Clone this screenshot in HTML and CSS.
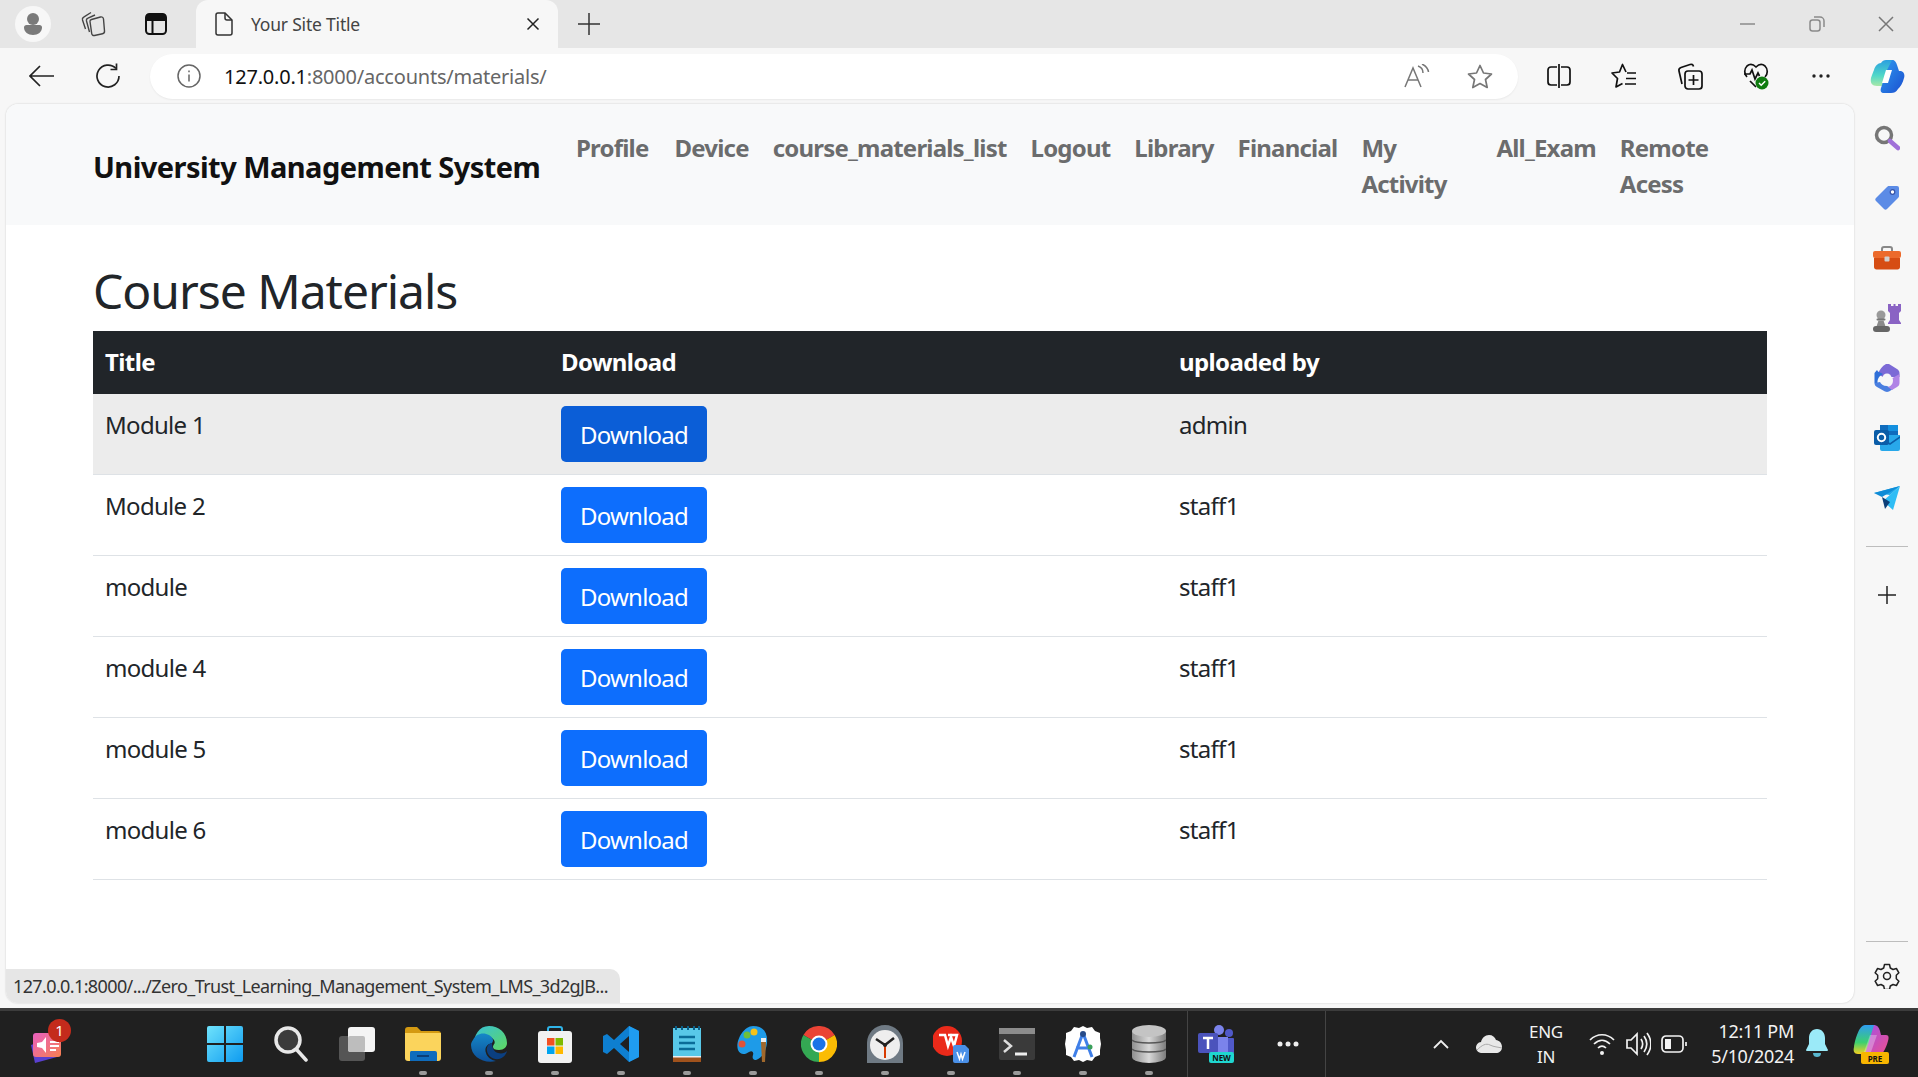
FILE: index.html
```html
<!DOCTYPE html>
<html lang="en">
<head>
    <meta charset="UTF-8">
    <title>Your Site Title</title>
    <link rel="stylesheet" href="styles.css">
</head>
<body>

    <!-- browser tab strip -->
    <div class="tabstrip">
        <div class="profile">
            <svg width="18" height="22" viewBox="0 0 18 22"><circle cx="9" cy="6" r="6" fill="#7a7a7a"/><path d="M0 14.500c0-1.500 1-2.500 2.500-2.500h13c1.500 0 2.500 1 2.500 2.500 0 4.500-4 7.500-9 7.500s-9-3-9-7.500z" fill="#7a7a7a"/></svg>
        </div>
        <div class="strip-btn">
            <svg width="26" height="26" viewBox="0 0 26 26" fill="none" stroke="#444" stroke-width="1.400"><path d="M11.500 8.500l9-2.500c1.500-.4 2.800.4 3 2l1 12c.2 1.500-.6 2.500-2 2.800l-8 1.700c-1.500.3-2.600-.5-2.800-2L10 10.500c-.2-1 .5-1.700 1.500-2z"/><path d="M9.500 21 6.500 10c-.3-1.300.3-2.300 1.500-2.800L15 4"/><path d="M5.500 18 2.500 9c-.4-1.300 0-2.200 1.200-2.900L11 1.500"/></svg>
        </div>
        <div class="strip-btn">
            <svg width="24" height="24" viewBox="0 0 24 24" fill="none"><rect x="2" y="2" width="20" height="20" rx="3.500" stroke="#111" stroke-width="2"/><path d="M2 5c0-2 1-3 3-3h14c2 0 3 1 3 3v4H2z" fill="#111"/><path d="M8.500 9v13" stroke="#111" stroke-width="2"/></svg>
        </div>
        <div class="tab">
            <svg width="18" height="24" viewBox="0 0 18 24" fill="none" stroke="#333" stroke-width="1.500"><path d="M3 1h7l7 7v13a2 2 0 0 1-2 2H3a2 2 0 0 1-2-2V3a2 2 0 0 1 2-2z"/><path d="M10 1v5a2 2 0 0 0 2 2h5"/></svg>
            <span class="tab-title">Your Site Title</span>
            <svg class="tab-close" width="14" height="14" viewBox="0 0 14 14" stroke="#222" stroke-width="1.500"><path d="M1.500 1.500l11 11M12.500 1.500l-11 11"/></svg>
        </div>
        <div class="newtab">
            <svg width="22" height="22" viewBox="0 0 22 22" stroke="#333" stroke-width="1.500"><path d="M11 0v22M0 11h22"/></svg>
        </div>
        <div class="win-controls">
            <svg width="16" height="16" viewBox="0 0 16 16" stroke="#8a8a8a" stroke-width="1.500"><path d="M0 8h15"/></svg>
            <svg width="16" height="16" viewBox="0 0 16 16" fill="none" stroke="#8a8a8a" stroke-width="1.500"><rect x="1" y="4" width="10" height="11" rx="2.500"/><path d="M5 1h6a4 4 0 0 1 4 4v6"/></svg>
            <svg width="16" height="16" viewBox="0 0 16 16" stroke="#777" stroke-width="1.500"><path d="M1 1l14 14M15 1 1 15"/></svg>
        </div>
    </div>

    <!-- address bar row -->
    <div class="toolbar">
        <div class="nav-btn">
            <svg width="26" height="22" viewBox="0 0 26 22" fill="none" stroke="#222" stroke-width="1.700"><path d="M1 11h24M11 1 1 11l10 10"/></svg>
        </div>
        <div class="nav-btn">
            <svg width="26" height="26" viewBox="0 0 26 26" fill="none" stroke="#222" stroke-width="1.700"><path d="M21 5.500A11 11 0 1 0 24 13"/><path d="M15.500 6.500h6v-6"/></svg>
        </div>
        <div class="urlbar">
            <svg width="24" height="24" viewBox="0 0 24 24" fill="none" stroke="#666" stroke-width="1.500"><circle cx="12" cy="12" r="11"/><path d="M12 10.500v7M12 6.500v1.800"/></svg>
            <span class="url"><span class="url-host">127.0.0.1</span>:8000/accounts/materials/</span>
            <div class="url-actions">
                <svg width="26" height="24" viewBox="0 0 26 24" fill="none" stroke="#777" stroke-width="1.500"><path d="M1 23 9 4l8 19M4 16h10"/><path d="M14 2c3 1 5 3 5 7M18 0c4 2 6 4 6.500 8"/></svg>
                <svg width="26" height="25" viewBox="0 0 26 25" fill="none" stroke="#777" stroke-width="1.700" stroke-linejoin="round"><path d="M13 1.500l3.500 7.500 8 1-6 5.500 1.700 8-7.200-4-7.200 4 1.700-8-6-5.500 8-1z"/></svg>
            </div>
        </div>
        <div class="tool-btns">
            <div class="tool-btn"><svg width="24" height="26" viewBox="0 0 24 26" fill="none" stroke="#111" stroke-width="1.700"><path d="M10 4H4a3 3 0 0 0-3 3v12a3 3 0 0 0 3 3h6M14 4h6a3 3 0 0 1 3 3v12a3 3 0 0 1-3 3h-6M12 1v24"/></svg></div>
            <div class="tool-btn"><svg width="26" height="26" viewBox="0 0 26 26" fill="none" stroke="#111" stroke-width="1.700" stroke-linejoin="round"><path d="M15 9 11.500 1.500 8.500 9 1 10l5.500 5.500L5 24l6.500-3.500"/><path d="M16 10h9M15 15.500h10M14 21h11"/></svg></div>
            <div class="tool-btn"><svg width="26" height="28" viewBox="0 0 26 28" fill="none" stroke="#111" stroke-width="1.700"><path d="M5 22 2 9c-.5-2 .5-3 2-3.500l9-3c2-.5 3 0 3.500 2"/><rect x="8" y="9" width="17" height="18" rx="3"/><path d="M16.500 13v10M11.500 18h10"/></svg></div>
            <div class="tool-btn"><svg width="26" height="28" viewBox="0 0 26 28"><path d="M4 15C1 12 1 7 4 4c3-2.500 6-2 9 1 3-3 6-3.500 9-1 3 3 3 8 0 11" fill="none" stroke="#111" stroke-width="1.700"/><path d="M1 12h6l2-4 3 9 3-6 1.500 3" fill="none" stroke="#111" stroke-width="1.700"/><path d="M7 19l6 6" stroke="#111" stroke-width="1.700"/><circle cx="19" cy="21" r="6.500" fill="#107c10"/><path d="M16 21l2.200 2.200 4-4" fill="none" stroke="#fff" stroke-width="1.500"/></svg></div>
            <div class="tool-btn"><svg width="20" height="6" viewBox="0 0 20 6" fill="#222"><circle cx="3" cy="3" r="1.700"/><circle cx="10" cy="3" r="1.700"/><circle cx="17" cy="3" r="1.700"/></svg></div>
            <div class="tool-btn">
                <svg width="36" height="36" viewBox="0 0 36 36">
                    <defs>
                        <linearGradient id="cpA" x1="0" y1="0" x2="0" y2="1"><stop offset="0" stop-color="#2a9fe0"/><stop offset="0.600" stop-color="#50d8c8"/><stop offset="1" stop-color="#a8e8a8"/></linearGradient>
                        <linearGradient id="cpB" x1="0" y1="0" x2="1" y2="1"><stop offset="0" stop-color="#2f9cf0"/><stop offset="1" stop-color="#1b4fd0"/></linearGradient>
                    </defs>
                    <path d="M12 5c1-2 3-3 5-3h6c3 0 2 3 1 5l-6 17c-1 3-3 4-5 4H8c-5 0-7-3-6-8 1-3 2-6 3-8 1-4 4-7 7-7z" fill="url(#cpA)"/>
                    <path d="M23 2c3 0 4 2 5 5l2 6h2c3 1 4 4 3 7-1 5-4 9-6 11-2 3-4 4-7 4h-7c-3 0-4-2-3-5l6-18z" fill="url(#cpB)"/>
                    <path d="M17 12h6l-4 13h-6z" fill="#fff"/>
                </svg>
            </div>
        </div>
    </div>

    <div class="middle">
        <div class="webview">
            <nav class="navbar">
                <a class="brand">University Management System</a>
                <ul class="nav-links">
                    <li><a>Profile</a></li>
                    <li><a>Device</a></li>
                    <li><a>course_materials_list</a></li>
                    <li><a>Logout</a></li>
                    <li><a>Library</a></li>
                    <li><a>Financial</a></li>
                    <li class="wide"><a>My<br>Activity</a></li>
                    <li><a>All_Exam</a></li>
                    <li><a>Remote<br>Acess</a></li>
                </ul>
            </nav>

            <div class="container">
                <h1>Course Materials</h1>
                <table class="materials">
                    <colgroup>
                        <col class="col-title">
                        <col class="col-download">
                        <col class="col-user">
                    </colgroup>
                    <thead>
                        <tr><th>Title</th><th>Download</th><th>uploaded by</th></tr>
                    </thead>
                    <tbody>
                        <tr class="hovered"><td>Module 1</td><td><a class="btn">Download</a></td><td>admin</td></tr>
                        <tr><td>Module 2</td><td><a class="btn">Download</a></td><td>staff1</td></tr>
                        <tr><td>module</td><td><a class="btn">Download</a></td><td>staff1</td></tr>
                        <tr><td>module 4</td><td><a class="btn">Download</a></td><td>staff1</td></tr>
                        <tr><td>module 5</td><td><a class="btn">Download</a></td><td>staff1</td></tr>
                        <tr><td>module 6</td><td><a class="btn">Download</a></td><td>staff1</td></tr>
                    </tbody>
                </table>
            </div>

            <div class="status-bubble">127.0.0.1:8000/.../Zero_Trust_Learning_Management_System_LMS_3d2gJB...</div>
        </div>

        <aside class="sidebar">
            <div class="side-btn">
                <svg width="26" height="26" viewBox="0 0 26 26"><circle cx="10" cy="10" r="7.500" fill="none" stroke="#767676" stroke-width="3.500"/><path d="M16 16l8 7" stroke="#a070d8" stroke-width="4.500" stroke-linecap="round"/></svg>
            </div>
            <div class="side-btn">
                <svg width="26" height="26" viewBox="0 0 26 26"><path d="M15 1h8a2 2 0 0 1 2 2v8c0 1-.5 1.500-1 2L13 24c-1 1-2 1-3 0L2 16c-1-1-1-2 0-3L13 2c.5-.5 1-1 2-1z" fill="#5b8be6"/><circle cx="18.500" cy="7" r="2.300" fill="#fff" stroke="#3553a8" stroke-width="1.200"/></svg>
            </div>
            <div class="side-btn">
                <svg width="28" height="24" viewBox="0 0 28 24"><path d="M9 6V3c0-1 1-2 2-2h6c1 0 2 1 2 2v3" fill="none" stroke="#888" stroke-width="2"/><rect x="0" y="5" width="28" height="7" rx="2" fill="#ec6a2c"/><path d="M1 12h26v9c0 1.500-1 2.500-2.500 2.500h-21C2 23.500 1 22.500 1 21z" fill="#d64d14"/><rect x="11.500" y="10.500" width="5" height="5" rx="1" fill="#d0d0d0"/></svg>
            </div>
            <div class="side-btn">
                <svg width="28" height="28" viewBox="0 0 28 28"><path d="M16 0h2v2h2.500V0h2v2H25V0h3v7l-2 2v7l2 3v1H15v-1l2-3V9l-2-2V0z" fill="#8a63c4"/><circle cx="8" cy="11" r="4.500" fill="#9a9a9a"/><rect x="3.500" y="14.500" width="9" height="2" rx="1" fill="#777"/><path d="M5.500 16.500h5l2 6h-9z" fill="#8a8a8a"/><rect x="0" y="22" width="17" height="6" rx="3" fill="#666"/></svg>
            </div>
            <div class="side-btn">
                <svg width="26" height="28" viewBox="0 0 26 28">
                    <path d="M12 0c1-.5 2-.5 3 0l8 5c1.500 1 2.500 2 2.500 4v4H17c-2-3-6-3-8 0l-5-3c2-5 4-8 8-10z" fill="#7c6ad6"/>
                    <path d="M3 6 .5 9v10l3.500 2c-1-3-1-8 5-11L4 7.500z" fill="#2f6fd8"/>
                    <path d="M.5 19c0 2 1 3 2.500 4l8 4.500c1.500.5 2.500.5 4 0l4-2.500-6-3c-4 0-6-2-7-4z" fill="#4a7fe0"/>
                    <path d="M25.500 10v9c0 2-1 3-2.500 4l-5 3-4-3c4-1 6-5 4.500-9z" fill="#b084e6"/>
                    <circle cx="13" cy="14" r="4.500" fill="#f7f7f7"/>
                </svg>
            </div>
            <div class="side-btn">
                <svg width="26" height="26" viewBox="0 0 26 26"><rect x="6" y="0" width="18" height="14" fill="#0f6cbd"/><path d="M6 10h20v14a2 2 0 0 1-2 2H8a2 2 0 0 1-2-2z" fill="#28a8ea"/><path d="M14 0h10v6H14z" fill="#1490df"/><path d="M6 11l10 7 10-7v2L16 20 6 13z" fill="#0a5da8"/><rect x="0" y="5" width="15" height="15" rx="2" fill="#0a5da8"/><circle cx="7.500" cy="12.500" r="3.700" fill="none" stroke="#fff" stroke-width="2"/></svg>
            </div>
            <div class="side-btn">
                <svg width="26" height="24" viewBox="0 0 26 24"><path d="M0 7 26 0 16 9z" fill="#1fa8ea"/><path d="M26 0 19 24 9 15z" fill="#2fbdf5"/><path d="M0 7l8 4 18-11z" fill="#0f8bd6"/><path d="M8 11l3 12 5-7z" fill="#0d3f78"/></svg>
            </div>
            <div class="side-divider"></div>
            <div class="side-btn">
                <svg width="20" height="20" viewBox="0 0 20 20" stroke="#222" stroke-width="1.500"><path d="M10 1v18M1 10h18"/></svg>
            </div>
            <div class="side-bottom">
                <div class="side-divider"></div>
                <div class="side-btn">
                    <svg width="26" height="26" viewBox="0 0 26 26" fill="none" stroke="#222" stroke-width="1.500" stroke-linejoin="round"><path d="M10.500 1.500h5l.8 3.500 2.700 1.500 3.400-1 2.500 4.300-2.600 2.500v3.400l2.600 2.500-2.500 4.300-3.400-1-2.700 1.500-.8 3.500h-5l-.8-3.500-2.700-1.500-3.400 1-2.500-4.300 2.600-2.500v-3.400L1.100 9.800 3.600 5.500l3.400 1L9.700 5z"/><circle cx="13" cy="13" r="3.500"/></svg>
                </div>
            </div>
        </aside>
    </div>

    <!-- windows taskbar -->
    <div class="taskbar">
        <div class="widget">
            <svg width="36" height="38" viewBox="0 0 36 38">
                <defs><linearGradient id="wgA" x1="0" y1="0" x2="1" y2="1"><stop offset="0" stop-color="#e860c0"/><stop offset="1" stop-color="#f88050"/></linearGradient></defs>
                <path d="M2 20 24 12l4 20-22 6z" fill="#5a40d0"/>
                <rect x="4" y="8" width="28" height="24" rx="3" fill="url(#wgA)"/>
                <path d="M8 18l5-1 4-5v16l-4-5-5-1z" fill="#fff"/>
                <path d="M21 17h9M21 21h9M21 25h6" stroke="#fff" stroke-width="2"/>
            </svg>
            <span class="badge">1</span>
        </div>
        <div class="task-apps">
            <div class="task-app">
                <svg width="36" height="36" viewBox="0 0 36 36"><defs><linearGradient id="winA" x1="0" y1="0" x2="1" y2="1"><stop offset="0" stop-color="#6fe3fc"/><stop offset="1" stop-color="#0e9bf0"/></linearGradient></defs><path d="M2 0h15v17H0V2a2 2 0 0 1 2-2zM19 0h15a2 2 0 0 1 2 2v15H19zM0 19h17v17H2a2 2 0 0 1-2-2zM19 19h17v15a2 2 0 0 1-2 2H19z" fill="url(#winA)"/></svg>
            </div>
            <div class="task-app">
                <svg width="34" height="36" viewBox="0 0 34 36"><circle cx="14" cy="14" r="12" fill="#3b3b3b" stroke="#e8e8e8" stroke-width="3.500"/><path d="M23 24l9 10" stroke="#e8e8e8" stroke-width="3.500" stroke-linecap="round"/></svg>
            </div>
            <div class="task-app">
                <svg width="36" height="34" viewBox="0 0 36 34"><rect x="0" y="9" width="26" height="25" rx="3" fill="#555"/><rect x="9" y="0" width="27" height="25" rx="3" fill="#f4f4f4"/><rect x="9" y="9" width="17" height="16" rx="2" fill="#bdbdbd"/></svg>
            </div>
            <div class="task-app running">
                <svg width="36" height="34" viewBox="0 0 36 34"><path d="M0 3a3 3 0 0 1 3-3h9l4 4h17a3 3 0 0 1 3 3v5H0z" fill="#d49a12"/><path d="M0 6h36v25a3 3 0 0 1-3 3H3a3 3 0 0 1-3-3z" fill="#fbd45c"/><path d="M6 24h24a2 2 0 0 1 2 2v8H5v-8a2 2 0 0 1 1-2z" fill="#0f6cbd"/><path d="M12 29h12" stroke="#0a3e78" stroke-width="2"/></svg>
            </div>
            <div class="task-app running">
                <svg width="36" height="36" viewBox="0 0 36 36">
                    <defs>
                        <linearGradient id="edA" x1="0" y1="0" x2="1" y2="1"><stop offset="0" stop-color="#37c0d8"/><stop offset="1" stop-color="#5fd860"/></linearGradient>
                        <linearGradient id="edB" x1="0" y1="0" x2="0" y2="1"><stop offset="0" stop-color="#1587c8"/><stop offset="1" stop-color="#0d4f98"/></linearGradient>
                    </defs>
                    <path d="M18 0c10 0 18 7 18 17 0 4-3 7-8 7-4 0-6-1-6-3 0-3 3-3 1-7-2-3-7-5-11-3-5 2-8 6-10 10C3 9 8 0 18 0z" fill="url(#edA)"/>
                    <path d="M2 14C5 7 13 6 18 9c4 2 5 6 3 8-5 1-8 5-6 10 1 4 5 7 10 8C13 38 0 31 0 19c0-2 1-4 2-5z" fill="url(#edB)"/>
                    <path d="M21 17c-3 0-6 4-5 8 1 5 6 9 12 8 4-1 7-4 8-8-2 2-5 3-9 2-4-1-6-5-6-10z" fill="#0b3f80"/>
                </svg>
            </div>
            <div class="task-app running">
                <svg width="34" height="38" viewBox="0 0 34 38"><path d="M10 8V4a2 2 0 0 1 2-2h10a2 2 0 0 1 2 2v4" fill="none" stroke="#2fb4e8" stroke-width="2"/><path d="M3 6h28a3 3 0 0 1 3 3v26a3 3 0 0 1-3 3H3a3 3 0 0 1-3-3V9a3 3 0 0 1 3-3z" fill="#f2f2f2"/><rect x="9" y="13" width="7.500" height="7.500" fill="#f25022"/><rect x="17.500" y="13" width="7.500" height="7.500" fill="#7fba00"/><rect x="9" y="21.500" width="7.500" height="7.500" fill="#00a4ef"/><rect x="17.500" y="21.500" width="7.500" height="7.500" fill="#ffb900"/></svg>
            </div>
            <div class="task-app running">
                <svg width="36" height="36" viewBox="0 0 36 36"><path d="M26 0l10 5v26l-10 5-15-14-7 6-4-2V10l4-2 7 6zM26 10l-9 8 9 8z" fill="#0e7fd0"/><path d="M26 0l10 5v26l-10 5z" fill="#1f9cf0"/></svg>
            </div>
            <div class="task-app running">
                <svg width="28" height="36" viewBox="0 0 28 36"><rect x="0" y="2" width="28" height="30" fill="#58c8e8"/><path d="M3 0v4M9 0v4M15 0v4M21 0v4M26 0v4" stroke="#0a5f88" stroke-width="2"/><path d="M6 11h16M6 17h16M6 23h16" stroke="#0a6c98" stroke-width="2.500"/><rect x="0" y="31" width="28" height="5" fill="#a0521c"/><rect x="0" y="30" width="28" height="1.500" fill="#eee"/></svg>
            </div>
            <div class="task-app running">
                <svg width="34" height="36" viewBox="0 0 34 36"><path d="M17 0c10 0 15 6 14 17-1 9-6 16-11 17-3 .5-4-2-3-5 1-3-1-5-4-3-4 3-9 3-11-2C-1 16 7 0 17 0z" fill="#1e9be8"/><circle cx="11" cy="9" r="3.500" fill="#6fbf3a"/><circle cx="18" cy="6" r="3.500" fill="#f5c21a"/><circle cx="6" cy="18" r="3.500" fill="#e0533a"/><rect x="25" y="12" width="5" height="5" fill="#eee"/><path d="M25 16h5l-1 20h-3z" fill="#a0682c"/></svg>
            </div>
            <div class="task-app running">
                <svg width="36" height="36" viewBox="0 0 36 36"><path d="M18 18 2.400 9A18 18 0 0 1 33.600 9z" fill="#ea4335"/><path d="M18 18 33.600 9A18 18 0 0 1 18 36z" fill="#fbbc04"/><path d="M18 18v18A18 18 0 0 1 2.400 9z" fill="#34a853"/><circle cx="18" cy="18" r="8.500" fill="#fff"/><circle cx="18" cy="18" r="6.500" fill="#1a73e8"/></svg>
            </div>
            <div class="task-app running">
                <svg width="36" height="38" viewBox="0 0 36 38"><path d="M0 38V18C0 8 8 0 18 0s18 8 18 18v20z" fill="#6f7a84"/><circle cx="18" cy="20" r="15" fill="#eee"/><path d="M18 20 9 14M18 20l9-7" stroke="#222" stroke-width="2.500"/><path d="M18 20v13" stroke="#d83b01" stroke-width="2"/><circle cx="18" cy="20" r="2" fill="#222"/></svg>
            </div>
            <div class="task-app running">
                <svg width="36" height="38" viewBox="0 0 36 38"><circle cx="14" cy="16" r="15" fill="#ea2a1a"/><path d="M6 10h6l3 11 3-9 3 9 3-11h-9" fill="none" stroke="#fff" stroke-width="2.500"/><path d="M22 20h10l4 4v12a2 2 0 0 1-2 2H22a2 2 0 0 1-2-2V22a2 2 0 0 1 2-2z" fill="#4a90e8"/><path d="M24 27l2.500 7 1.500-5 1.500 5 2.500-7" fill="none" stroke="#fff" stroke-width="1.500"/></svg>
            </div>
            <div class="task-app running">
                <svg width="36" height="32" viewBox="0 0 36 32"><rect x="0" y="0" width="36" height="32" rx="2" fill="#3a3a3a"/><rect x="0" y="0" width="36" height="6" fill="#8c8c8c"/><path d="M5 12l7 6-7 6" fill="none" stroke="#ddd" stroke-width="2.500"/><path d="M16 26h12" stroke="#eee" stroke-width="3"/></svg>
            </div>
            <div class="task-app running">
                <svg width="36" height="36" viewBox="0 0 36 36"><path d="M18 0l4 2 5-1 3 4 5 2v5l1 6-1 6v5l-5 2-3 4-5-1-4 2-4-2-5 1-3-4-5-2v-5L0 18l1-6V7l5-2 3-4 5 1z" fill="#fff"/><path d="M18 7l-9 24M18 7l9 24M11 22h14" fill="none" stroke="#3f7fe8" stroke-width="3"/><circle cx="18" cy="8" r="3" fill="#274b8a"/><circle cx="25" cy="21" r="2.500" fill="#3aa05a"/></svg>
            </div>
            <div class="task-app running">
                <svg width="34" height="38" viewBox="0 0 34 38"><defs><linearGradient id="dbA" x1="0" y1="0" x2="1" y2="0"><stop offset="0" stop-color="#8f8f8f"/><stop offset="0.500" stop-color="#d8d8d8"/><stop offset="1" stop-color="#7c7c7c"/></linearGradient></defs><rect x="0" y="6" width="34" height="26" fill="url(#dbA)"/><ellipse cx="17" cy="32" rx="17" ry="6" fill="url(#dbA)"/><ellipse cx="17" cy="6" rx="17" ry="6" fill="#c4c4c4"/><path d="M0 15c3 4 31 4 34 0M0 24c3 4 31 4 34 0" fill="none" stroke="#555" stroke-width="1.500"/></svg>
            </div>
        </div>
        <div class="task-sep"></div>
        <div class="task-teams">
            <svg width="36" height="38" viewBox="0 0 36 38"><circle cx="21" cy="5" r="5" fill="#7b83eb"/><circle cx="31" cy="8" r="4" fill="#5059c9"/><path d="M24 13h11a1 1 0 0 1 1 1v14H24z" fill="#5059c9"/><path d="M12 12h18v20H12z" fill="#7b83eb"/><rect x="0" y="8" width="20" height="20" rx="2" fill="#4b53bc"/><path d="M5 13h10M10 13v11" stroke="#fff" stroke-width="2.500"/><rect x="11" y="27" width="25" height="11" rx="2" fill="#1fd6d0"/><text class="new-tag" x="23.500" y="36">NEW</text></svg>
        </div>
        <div class="task-more">
            <svg width="22" height="6" viewBox="0 0 22 6" fill="#eee"><circle cx="3" cy="3" r="2.500"/><circle cx="11" cy="3" r="2.500"/><circle cx="19" cy="3" r="2.500"/></svg>
        </div>
        <div class="task-sep"></div>
        <div class="tray">
            <svg class="tray-chevron" width="16" height="10" viewBox="0 0 16 10" fill="none" stroke="#eee" stroke-width="1.800"><path d="M1 9l7-7 7 7"/></svg>
            <svg class="tray-cloud" width="26" height="18" viewBox="0 0 26 18"><path d="M6 18a5.500 5.500 0 0 1-1-11C6 3 9 0 13 0c3.500 0 6 2 7 5 3 .3 6 3 6 7s-3 6-6 6z" fill="#e8e8e8"/><path d="M1 15c5-5 9-7 13-5s8 2 12 3" fill="none" stroke="#aaa" stroke-width="1"/></svg>
            <div class="tray-lang">ENG<br>IN</div>
            <svg width="26" height="24" viewBox="0 0 26 24" fill="none" stroke="#f2f2f2" stroke-width="1.700"><path d="M1 8c7-7 17-7 24 0M5 12c5-5 11-5 16 0M9 16c2.500-2.500 5.500-2.500 8 0"/><circle cx="13" cy="21" r="2" fill="#f2f2f2" stroke="none"/></svg>
            <svg class="tray-vol" width="25" height="24" viewBox="0 0 25 24" fill="none" stroke="#f2f2f2" stroke-width="1.700"><path d="M1 8h4l6-6v20l-6-6H1z"/><path d="M15 7c2 3 2 7 0 10M18 4c3.500 5 3.500 11 0 16M21 1c5 7 5 15 0 22"/></svg>
            <svg width="26" height="18" viewBox="0 0 26 18" fill="none" stroke="#f2f2f2" stroke-width="1.700"><rect x="1" y="1" width="21" height="16" rx="4"/><rect x="4" y="4" width="6" height="10" fill="#f2f2f2" stroke="none"/><path d="M25 7v4"/></svg>
            <div class="tray-clock">12:11 PM<br>5/10/2024</div>
            <svg class="tray-bell" width="22" height="30" viewBox="0 0 22 30"><path d="M11 0c5 0 8 4 8 9v6l3 6a1 1 0 0 1-1 1H1a1 1 0 0 1-1-1l3-6V9c0-5 3-9 8-9z" fill="#9beaf8"/><path d="M7 24h8c0 3-2 4-4 4s-4-1-4-4z" fill="#58b8d0"/></svg>
            <svg class="tray-copilot" width="36" height="40" viewBox="0 0 36 40">
                <defs>
                    <linearGradient id="preA" x1="0" y1="0" x2="0" y2="1"><stop offset="0" stop-color="#2f9cf0"/><stop offset="0.600" stop-color="#3cd070"/><stop offset="1" stop-color="#f5d020"/></linearGradient>
                    <linearGradient id="preB" x1="0" y1="0" x2="1" y2="1"><stop offset="0" stop-color="#a050e8"/><stop offset="1" stop-color="#f0508c"/></linearGradient>
                </defs>
                <path d="M12 1h9c2 0 2 3 1 5l-8 22c-1 2-3 2-5 2H5c-4 0-5-3-4-7C2 16 6 1 12 1z" fill="url(#preA)"/>
                <path d="M21 1c3 0 5 2 6 6l1 4h5c3 0 3 3 2 6-2 7-5 15-12 15h-9c-3 0-2-3-1-5z" fill="url(#preB)"/>
                <path d="M17 11h7l-6 17h-7z" fill="#fff" opacity="0.300"/>
                <rect x="8" y="28" width="28" height="12" rx="2" fill="#f7b500"/>
                <text class="pre-tag" x="22" y="38">PRE</text>
            </svg>
        </div>
    </div>

</body>
</html>
```

FILE: styles.css
```css
* {
    box-sizing: border-box;
}

html, body {
    margin: 0;
    padding: 0;
    height: 100%;
}

body {
    width: 1918px;
    height: 1077px;
    overflow: hidden;
    display: flex;
    flex-direction: column;
    background-color: #f7f7f7;
    font-family: "Noto Sans", "Open Sans", sans-serif;
    color: #212529;
}

svg {
    display: block;
    flex-shrink: 0;
}

/* browser chrome */
.tabstrip {
    height: 48px;
    display: flex;
    align-items: center;
    background-color: #e6e6e6;
    padding-left: 15px;
}

.profile {
    width: 36px;
    height: 36px;
    border-radius: 50%;
    background-color: #f7f7f7;
    display: flex;
    align-items: center;
    justify-content: center;
    margin-right: 24px;
}

.strip-btn {
    width: 36px;
    display: flex;
    justify-content: center;
    margin-right: 27px;
}

.strip-btn + .tab {
    margin-left: -5px;
}

.tab {
    width: 362px;
    height: 48px;
    background-color: #f7f7f7;
    border-radius: 12px 12px 0 0;
    display: flex;
    align-items: center;
    padding: 0 18px 0 19px;
}

.tab-title {
    margin-left: 18px;
    font-size: 17.5px;
    letter-spacing: -0.2px;
    color: #444;
    flex: 1;
}

.newtab {
    margin-left: 20px;
}

.win-controls {
    margin-left: auto;
    display: flex;
    align-items: center;
    gap: 53px;
    padding-right: 24px;
}

.toolbar {
    height: 56px;
    display: flex;
    align-items: center;
    background-color: #f7f7f7;
}

.nav-btn {
    width: 66px;
    flex-shrink: 0;
    display: flex;
    justify-content: center;
}

.nav-btn:first-child {
    width: 75px;
    padding-left: 9px;
}

.urlbar {
    width: 1368px;
    height: 45px;
    flex-shrink: 0;
    margin-left: 9px;
    background-color: #fff;
    border-radius: 23px;
    box-shadow: 0 1px 2px rgba(0, 0, 0, 0.06);
    display: flex;
    align-items: center;
    padding: 0 25px 0 27px;
}

.url {
    margin-left: 23px;
    font-size: 20px;
    letter-spacing: -0.22px;
    color: #666;
}

.url-host {
    color: #111;
}

.url-actions {
    margin-left: auto;
    display: flex;
    align-items: center;
    gap: 37px;
}

.tool-btns {
    display: flex;
    align-items: center;
    margin-left: 8px;
}

.tool-btn {
    width: 65.6px;
    display: flex;
    justify-content: center;
}

.middle {
    flex: 1;
    display: flex;
    min-height: 0;
}

/* page inside the browser */
.webview {
    position: relative;
    width: 1848px;
    height: 899px;
    margin-left: 6px;
    background-color: #fff;
    border-radius: 12px;
    overflow: hidden;
    box-shadow: 0 0 2px rgba(0, 0, 0, 0.2);
}

.navbar {
    height: 121px;
    background-color: #f8f9fa;
    display: flex;
    align-items: center;
    padding: 3px 87px 0;
}

.brand {
    font-size: 29px;
    line-height: 45px;
    font-weight: 700;
    letter-spacing: -0.55px;
    color: #111;
    width: 471px;
    white-space: nowrap;
}

.nav-links {
    list-style: none;
    margin: 0;
    padding: 0;
    display: flex;
    align-items: flex-start;
}

.nav-links li {
    padding: 0 12px;
    font-size: 24px;
    line-height: 36px;
    font-weight: 700;
    letter-spacing: -0.8px;
    color: #6b6c6d;
    white-space: nowrap;
}

.nav-links li:first-child {
    padding-right: 14px;
}

.nav-links .wide {
    width: 135px;
}

.container {
    padding: 37px 87px 0;
}

h1 {
    margin: 0 0 11px;
    font-size: 48px;
    line-height: 58px;
    font-weight: 400;
    letter-spacing: -1.03px;
    color: #212529;
}

.materials {
    width: 1674px;
    border-collapse: collapse;
    table-layout: fixed;
    font-size: 24px;
    line-height: 36px;
}

.col-title {
    width: 456px;
}

.col-download {
    width: 618px;
}

.materials th {
    background-color: #212529;
    color: #fff;
    text-align: left;
    font-weight: 700;
    letter-spacing: -0.6px;
    padding: 13px 12px 14px;
}

.materials td {
    vertical-align: top;
    padding: 13px 12px 12px;
    height: 81px;
    border-bottom: 1px solid #dee2e6;
    letter-spacing: -0.7px;
}

.hovered td {
    background-color: #ececec;
}

.materials .hovered td {
    height: 80px;
}

.btn {
    display: inline-block;
    width: 146px;
    height: 56px;
    margin-top: -1px;
    line-height: 58px;
    text-align: center;
    letter-spacing: -0.8px;
    background-color: #0d6efd;
    color: #fff;
    border-radius: 5px;
}

.hovered .btn {
    background-color: #0b5ed7;
}

.status-bubble {
    position: absolute;
    left: 0;
    bottom: 0;
    width: 614px;
    height: 34px;
    padding-left: 7px;
    background-color: #e6e6e6;
    border-radius: 0 10px 0 10px;
    font-size: 18px;
    line-height: 34px;
    letter-spacing: -0.62px;
    color: #333;
    white-space: nowrap;
    overflow: hidden;
}

.sidebar {
    width: 64px;
    height: 904px;
    display: flex;
    flex-direction: column;
    align-items: center;
    padding: 4px 0 0 2px;
}

.side-btn {
    height: 60px;
    width: 100%;
    display: flex;
    align-items: center;
    justify-content: center;
}

.side-divider {
    width: 42px;
    height: 1px;
    background-color: #bdbdbd;
    margin: 18px 0 18px;
    flex-shrink: 0;
}

.side-bottom {
    margin-top: auto;
    width: 100%;
    display: flex;
    flex-direction: column;
    align-items: center;
    padding-bottom: 4px;
}

.side-bottom .side-divider {
    margin: 0 0 6px;
}

.side-bottom .side-btn {
    height: 56px;
}

/* windows taskbar */
.taskbar {
    height: 69px;
    flex-shrink: 0;
    display: flex;
    align-items: center;
    background-color: #202020;
    border-top: 3px solid #3c3c3c;
    color: #f2f2f2;
}

.widget {
    position: relative;
    margin-left: 29px;
    width: 36px;
}

.badge {
    position: absolute;
    top: -6px;
    right: -6px;
    width: 23px;
    height: 23px;
    border-radius: 50%;
    background-color: #c42b1c;
    color: #fff;
    font-size: 15px;
    line-height: 23px;
    text-align: center;
}

.task-apps {
    display: flex;
    margin-left: 127px;
}

.task-app {
    position: relative;
    width: 66px;
    height: 66px;
    display: flex;
    align-items: center;
    justify-content: center;
}

.task-app.running::after {
    content: "";
    position: absolute;
    left: 29px;
    bottom: 2px;
    width: 8px;
    height: 4px;
    border-radius: 2px;
    background-color: #9a9a9a;
}

.task-sep {
    width: 1px;
    height: 66px;
    background-color: #444;
}

.task-apps + .task-sep {
    margin-left: 5px;
}

.task-teams {
    margin-left: 10px;
    width: 36px;
}

.task-more {
    margin-left: 43px;
    margin-right: 26px;
}

.tray {
    flex: 1;
    display: flex;
    align-items: center;
    padding-left: 107px;
}

.tray-cloud {
    margin-left: 27px;
}

.tray-lang {
    width: 60px;
    margin: 0 13px 0 14px;
    text-align: center;
    font-size: 17px;
    line-height: 25px;
    letter-spacing: -0.3px;
}

.tray-vol {
    margin: 0 10px 0 11px;
}

.tray-clock {
    width: 100px;
    text-align: right;
    font-size: 18px;
    line-height: 25px;
    letter-spacing: -0.3px;
    margin-left: 7px;
}

.tray-bell {
    margin-left: 12px;
}

.tray-copilot {
    margin-left: 25px;
}

.new-tag, .pre-tag {
    font-family: "Noto Sans", sans-serif;
    font-size: 8px;
    font-weight: 700;
    text-anchor: middle;
    fill: #111;
}
```
